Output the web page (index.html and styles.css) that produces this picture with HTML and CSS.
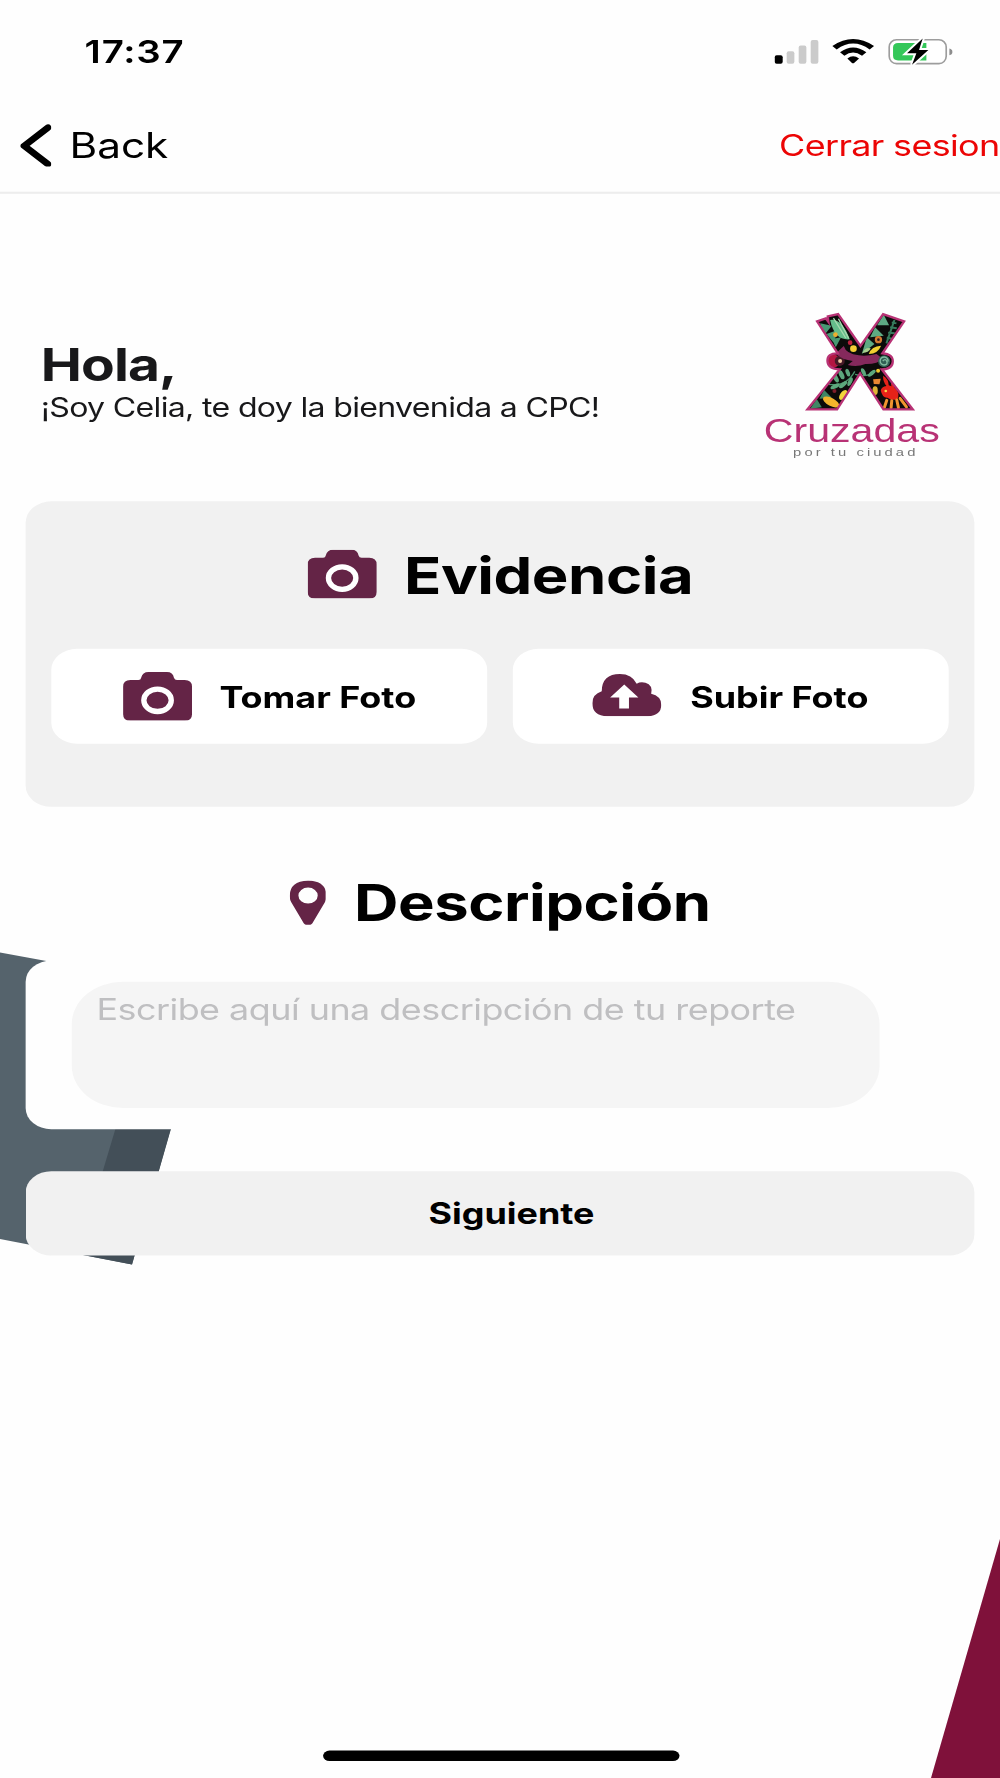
FILE: index.html
```html
<!DOCTYPE html>
<html lang="es">
<head>
  <meta charset="UTF-8" />
  <meta name="viewport" content="width=device-width, initial-scale=1.0"/>
  <title>Cruzadas por tu ciudad - Reporte</title>
  <link rel="stylesheet" href="styles.css">
</head>
<body>
  <div class="screen">

    <!-- Background shapes -->
    <svg class="background" viewBox="0 0 1000 1778" preserveAspectRatio="none">
      <polygon points="0,952.5 210,991 132,1264.500 0,1239" fill="#55636c"/>
      <polygon points="154,1000 208,1000 132,1264.500 78,1254" fill="#434f58"/>
      <polygon points="1000,1539 1000,1778 931,1778" fill="#7f113a"/>
    </svg>

    <!-- Status bar -->
    <div class="status-bar">
      <span class="time">17:37</span>
      <svg class="status-icons" viewBox="104 55 536 83" preserveAspectRatio="none">
        <rect x="105" y="107" width="24" height="26" rx="6" fill="#000"/>
        <rect x="141" y="95" width="23" height="38" rx="6" fill="#cbcbcb"/>
        <rect x="177" y="78" width="23" height="55" rx="6" fill="#cbcbcb"/>
        <rect x="213" y="61" width="23" height="72" rx="6" fill="#cbcbcb"/>
        <path d="M278 79Q340 37 403 79L390 90Q340 54 291 90Z"/>
        <path d="M301 98Q340 69 380 98L367 109Q340 89 314 109Z"/>
        <path d="M323 117Q340 104 358 117L344 130Q340 133 336 130Z"/>
        <rect x="448.500" y="60.500" width="171" height="72" rx="22" fill="#fff" stroke="#9d9d9d" stroke-width="5"/>
        <path d="M475 70H560V123H475Q460 123 460 109V84Q460 70 475 70Z" fill="#34c759"/>
        <path d="M629 87Q638 89 638 97T629 107Z" fill="#8d8d8d"/>
        <path d="M549 57L502 101H530L517 136L566 91H538Z" stroke="#fff" stroke-width="12"/>
        <path d="M549 57L502 101H530L517 136L566 91H538Z"/>
      </svg>
    </div>

    <!-- Navigation -->
    <header class="header">
      <a class="back">
        <svg class="chevron" viewBox="0 0 92 130" preserveAspectRatio="none">
          <path d="M82 10L11 65L82 120" fill="none" stroke="#000" stroke-width="20" stroke-linecap="round"/>
        </svg>
        <span>Back</span>
      </a>
      <a class="logout">Cerrar sesion</a>
    </header>

    <main>
      <section class="greeting">
        <div class="greeting-text">
          <h1>Hola,</h1>
          <p>¡Soy Celia, te doy la bienvenida a CPC!</p>
        </div>
        <svg class="logo" viewBox="0 0 690 540" preserveAspectRatio="none">
          <defs>
            <clipPath id="x-shape">
              <path d="M236 92L262 83L270 94L268 77L299 70L366 166L434 70L497 92L432 188Q464 190 463 213T430 236L523 356H435L365 248L296 356H207L304 236Q268 235 267 211T298 188Z"/>
            </clipPath>
          </defs>
          <g clip-path="url(#x-shape)">
            <rect x="190" y="60" width="350" height="310" fill="#0c0b0a"/>
            <path d="M245 98L280 105L258 133ZM264 130L304 116L284 154ZM280 145L308 140L292 170Z" fill="#479873"/>
            <path d="M275 88Q310 82 334 146Q288 150 275 88Z" fill="#65bd8b"/>
            <path d="M285 82L322 142M300 84L331 144" stroke="#a6d8ae" stroke-width="4"/>
            <path d="M436 72L452 104L416 104ZM410 110L436 135L395 140ZM385 140L408 160L370 190Z" fill="#5eaa83"/>
            <path d="M468 88L444 158M460 95L474 98M455 110L475 113M449 126L469 128M445 141L461 144" stroke="#367b5c" stroke-width="6"/>
            <circle cx="420" cy="147" r="11" fill="#d47a31"/>
            <circle cx="420" cy="147" r="4" fill="#351b20"/>
            <circle cx="291" cy="132" r="7" fill="#efaf2e"/>
            <circle cx="335" cy="156" r="7" fill="#bd213d"/>
            <circle cx="345" cy="174" r="10" fill="#f4ce35"/>
            <path d="M372 187Q380 169 397 173Q391 187 372 187Z" fill="#a7d08c"/>
            <path d="M391 190Q399 166 428 165Q419 189 391 190Z" fill="#f1cf31"/>
            <circle cx="284" cy="211" r="20" fill="#b41642"/>
            <circle cx="304" cy="211" r="15" fill="#461927"/>
            <circle cx="305" cy="211" r="6" fill="#f3c7a2"/>
            <path d="M291 189L316 166Q323 190 361 194Q386 197 414 190L434 205Q416 221 381 220Q355 231 328 223L343 211Q311 207 291 189Z" fill="#85295c"/>
            <circle cx="437" cy="212" r="18" fill="#315f54"/>
            <path d="M449 212A12 12 0 1 0 437 223Q449 222 445 212T433 211" fill="none" stroke="#83bca0" stroke-width="4"/>
            <path d="M271 281Q323 290 349 242M350 251Q389 262 410 242" fill="none" stroke="#4b946d" stroke-width="4"/>
            <g fill="#5ca77c">
              <ellipse cx="291" cy="261" rx="7" ry="16" transform="rotate(-30 291 261)"/>
              <ellipse cx="309" cy="252" rx="7" ry="15" transform="rotate(-25 309 252)"/>
              <ellipse cx="328" cy="246" rx="6" ry="12" transform="rotate(-20 328 246)"/>
              <ellipse cx="290" cy="287" rx="6" ry="15" transform="rotate(65 290 287)"/>
              <ellipse cx="314" cy="282" rx="6" ry="15" transform="rotate(50 314 282)"/>
              <ellipse cx="335" cy="273" rx="6" ry="14" transform="rotate(25 335 273)"/>
              <ellipse cx="375" cy="244" rx="6" ry="12" transform="rotate(-25 375 244)"/>
              <ellipse cx="400" cy="248" rx="6" ry="14" transform="rotate(50 400 248)"/>
            </g>
            <path d="M257 298L280 321L243 324ZM235 325L250 350L215 354Z" fill="#408665"/>
            <circle cx="288" cy="301" r="6" fill="#7e1d2c"/>
            <ellipse cx="278" cy="334" rx="27" ry="12" transform="rotate(28 278 334)" fill="#f4b42c"/>
            <ellipse cx="314" cy="313" rx="9" ry="17" transform="rotate(35 314 313)" fill="#f2d53b"/>
            <circle cx="419" cy="240" r="6" fill="#eec831"/>
            <path d="M404 266L427 264L423 281L406 280Z" fill="#e88732"/>
            <ellipse cx="410" cy="300" rx="8" ry="13" fill="#ddb436"/>
            <path d="M434 255Q450 264 451 284L459 287Q455 269 466 266Q471 278 468 291Q487 306 477 326Q461 331 447 321Q431 322 427 299Q429 288 444 286Q433 272 434 255Z" fill="#e62219"/>
            <circle cx="442" cy="301" r="4" fill="#f6d84a"/>
            <path d="M445 329L438 350M460 330L458 351M475 328L480 351M485 323L504 349" stroke="#f1942f" stroke-width="9" stroke-linecap="round"/>
            <path d="M471 268L486 279M473 284L489 292" stroke="#76292a" stroke-width="5"/>
          </g>
          <path d="M236 92L262 83L270 94L268 77L299 70L366 166L434 70L497 92L432 188Q464 190 463 213T430 236L523 356H435L365 248L296 356H207L304 236Q268 235 267 211T298 188Z" fill="none" stroke="#b83275" stroke-width="7"/>
          <text class="logo-name" x="76" y="455" textLength="528" lengthAdjust="spacingAndGlyphs">Cruzadas</text>
          <text class="logo-tagline" x="164" y="497" textLength="376" lengthAdjust="spacingAndGlyphs">por tu ciudad</text>
        </svg>
      </section>

      <!-- Evidence -->
      <section class="card">
        <h2 class="title">
          <svg class="icon-camera" viewBox="0 0 206 146" preserveAspectRatio="none">
            <path d="M22 24H46Q53 24 54 17Q58 0 76 0H131Q149 0 152 17Q154 24 161 24H184Q206 24 206 44V126Q206 146 184 146H22Q0 146 0 126V44Q0 24 22 24Z" fill="#642446"/>
            <ellipse cx="103" cy="84.500" rx="41" ry="33.500" fill="none" stroke="#fff" stroke-width="16"/>
          </svg>
          <span>Evidencia</span>
        </h2>
        <div class="actions">
          <button class="photo-button">
            <svg class="icon-camera" viewBox="0 0 206 146" preserveAspectRatio="none">
              <path d="M22 24H46Q53 24 54 17Q58 0 76 0H131Q149 0 152 17Q154 24 161 24H184Q206 24 206 44V126Q206 146 184 146H22Q0 146 0 126V44Q0 24 22 24Z" fill="#642446"/>
              <ellipse cx="103" cy="84.500" rx="41" ry="33.500" fill="none" stroke="#fff" stroke-width="16"/>
            </svg>
            <span>Tomar Foto</span>
          </button>
          <button class="photo-button">
            <svg class="icon-cloud" viewBox="0 0 205 126" preserveAspectRatio="none">
              <path d="M45 126Q0 124 0 87Q0 60 28 51Q29 0 82 0Q118 0 132 29Q143 22 158 26Q181 33 175 59Q205 66 205 92Q205 123 165 126Z" fill="#642446"/>
              <path d="M95 31L137 70H109V103H80V70H53Z" fill="#fff"/>
            </svg>
            <span>Subir Foto</span>
          </button>
        </div>
      </section>

      <!-- Description -->
      <h2 class="title description-title">
        <svg class="icon-pin" viewBox="0 0 110 135" preserveAspectRatio="none">
          <path fill-rule="evenodd" d="M55 0Q110 2 110 46Q110 57 105 66L68 128Q62 135 55 135T42 128L5 66Q0 57 0 46Q0 2 55 0ZM55 21A29 24 0 1 0 55 69A29 24 0 1 0 55 21Z" fill="#642446"/>
        </svg>
        <span>Descripción</span>
      </h2>
      <section class="description">
        <textarea placeholder="Escribe aquí una descripción de tu reporte"></textarea>
      </section>

      <button class="next">Siguiente</button>
    </main>

    <div class="home-indicator"></div>
  </div>
</body>
</html>
```
FILE: styles.css
```css
* {
  box-sizing: border-box;
}

body {
  margin: 0;
  padding: 0;
  width: 1000px;
  height: 1778px;
  overflow: hidden;
  background: #fefefe;
  font-family: Inter, "Liberation Sans", sans-serif;
}

/* 390x844 phone screen stretched over the whole page */
.screen {
  position: relative;
  display: flex;
  flex-direction: column;
  width: 390px;
  height: 844px;
  overflow: hidden;
  transform: scale(2.5641, 2.1066);
  transform-origin: 0 0;
}

.background {
  position: absolute;
  top: 0;
  left: 0;
  width: 100%;
  height: 100%;
  z-index: -1;
}

svg {
  display: block;
  flex-shrink: 0;
}

h1, h2, p {
  margin: 0;
}

button {
  border: none;
  padding: 0;
  color: #000;
  font-family: inherit;
  font-size: 14px;
  font-weight: 700;
}

.status-bar {
  display: flex;
  justify-content: space-between;
  height: 47px;
  padding: 0 18px 0 33px;
}

.time {
  margin-top: 15.4px;
  font-size: 15px;
  line-height: 20px;
  font-weight: 600;
  letter-spacing: 0.3px;
}

.status-icons {
  width: 69.7px;
  height: 13.1px;
  margin-top: 18.4px;
}

.header {
  display: flex;
  align-items: center;
  justify-content: space-between;
  height: 45px;
  padding: 0 0.2px 0 8.3px;
  border-bottom: 1px solid #ededed;
}

.back {
  display: flex;
  align-items: center;
  gap: 6.8px;
  font-size: 16.5px;
}

.back span {
  padding-top: 0.8px;
}

.chevron {
  width: 12px;
  height: 20.5px;
}

.logout {
  padding-bottom: 1.6px;
  color: #ec0505;
  font-size: 14px;
  letter-spacing: -0.25px;
}

main {
  display: flex;
  flex-direction: column;
  padding: 46px 10px 0;
}

.greeting {
  display: flex;
  justify-content: space-between;
  height: 100.2px;
  padding: 0 2.1px 0 5.9px;
}

.greeting-text {
  padding-top: 22.4px;
  color: #18181a;
}

.greeting-text h1 {
  font-size: 21.5px;
  line-height: 27px;
  font-weight: 700;
  letter-spacing: -0.35px;
}

.greeting-text p {
  font-size: 12.5px;
  line-height: 14px;
  letter-spacing: -0.26px;
}

.logo {
  width: 89.7px;
  height: 85.4px;
  margin-top: -0.3px;
}

.logo-name {
  font: 98px "Liberation Sans", sans-serif;
  fill: #b83275;
}

.logo-tagline {
  font: 34px "Liberation Sans", sans-serif;
  letter-spacing: 7px;
  fill: #777;
}

.card {
  height: 145px;
  padding: 20px 10px 0;
  border-radius: 10px;
  background: #f1f1f1;
}

.title {
  display: flex;
  align-items: center;
  justify-content: center;
  gap: 11px;
  height: 30px;
  font-size: 24px;
  font-weight: 700;
  letter-spacing: -0.18px;
}

.icon-camera {
  width: 26.9px;
  height: 23.2px;
  margin-bottom: 0.6px;
}

.icon-cloud {
  width: 26.9px;
  height: 20px;
  margin-bottom: 0.6px;
}

.icon-pin {
  width: 14.3px;
  height: 21.4px;
}

.actions {
  display: flex;
  gap: 10px;
  margin-top: 20px;
}

.photo-button {
  display: flex;
  align-items: center;
  justify-content: center;
  gap: 11px;
  width: 170px;
  height: 45px;
  padding-bottom: 0.6px;
  border-radius: 10px;
  background: #fff;
}

.description-title {
  margin-top: 30.4px;
}

.description {
  height: 79.6px;
  margin-top: 12.6px;
  padding: 10px 0 0 17.6px;
  border-radius: 10px;
  background: #fefefe;
}

textarea {
  display: block;
  width: 315px;
  height: 60px;
  padding: 3px 10px;
  border: none;
  border-radius: 20px;
  background: #f5f5f5;
  font-family: inherit;
  font-size: 14px;
  line-height: 20px;
  letter-spacing: -0.2px;
  resize: none;
}

textarea::placeholder {
  color: #bfbfc1;
}

.next {
  height: 40px;
  margin-top: 20px;
  padding-left: 9px;
  border-radius: 10px;
  background: #f1f1f1;
}

.home-indicator {
  width: 139px;
  height: 5px;
  margin: auto auto 8px 125.800px;
  border-radius: 3px;
  background: #000;
}
```
